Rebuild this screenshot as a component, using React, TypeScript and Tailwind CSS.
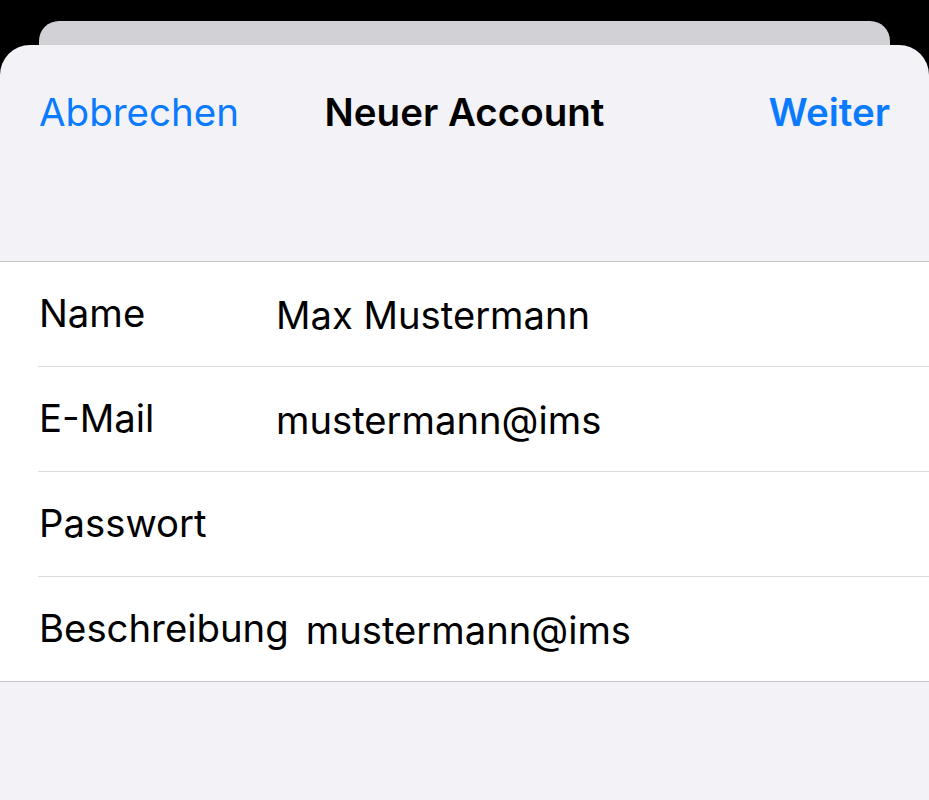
const fields = [
  { label: "Name", value: "Max Mustermann" },
  { label: "E-Mail", value: "mustermann@ims" },
  { label: "Passwort", value: "" },
  { label: "Beschreibung", value: "mustermann@ims" },
];

const App = () => {
  return (
    <div
      className="flex h-[800px] flex-col bg-black text-black"
      style={{ fontFamily: "Inter, 'Liberation Sans', sans-serif" }}
    >
      {/* card behind the sheet */}
      <div className="mx-[39px] mt-[21px] h-[24px] shrink-0 rounded-t-[20px] bg-[#d1d1d6]" />

      {/* sheet */}
      <div className="flex flex-1 flex-col rounded-t-[30px] bg-[#f2f2f7]">
        <nav className="grid h-[134px] grid-cols-[1fr_auto_1fr] items-center pl-[39px] pr-[39px] text-[38.5px] leading-none">
          <button className="justify-self-start text-[#0a7aff]">Abbrechen</button>
          <h1 className="font-semibold">Neuer Account</h1>
          <button className="justify-self-end font-semibold text-[#0a7aff]">Weiter</button>
        </nav>

        <ul className="mt-[82px] border-y border-[#c8c7cc] bg-white">
          {fields.map((f, i) => (
            <li
              key={f.label}
              className={`ml-[38px] flex items-center pl-[1px] ${
                i < fields.length - 1 ? "h-[105px] border-b border-[#dcdcde]" : "h-[104px]"
              }`}
            >
              <span className="mr-[17px] min-w-[220px] text-[38.3px]">{f.label}</span>
              <span className="pt-[4px] text-[38.2px]">{f.value}</span>
            </li>
          ))}
        </ul>
      </div>
    </div>
  );
};

export default App;
